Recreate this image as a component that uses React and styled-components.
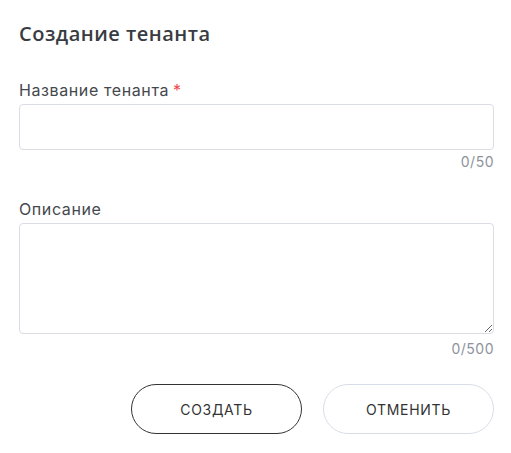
import React from 'react';
import styled, { createGlobalStyle } from 'styled-components';

const GlobalStyle = createGlobalStyle`
  body {
    margin: 0;
    background: #ffffff;
    font-family: Inter, "Noto Sans", sans-serif;
  }
`;

const Form = styled.form`
  display: flex;
  flex-direction: column;
  padding: 22px 17px 0 19px;
`;

const Title = styled.h2`
  margin: 0 0 34px;
  font-family: "Open Sans", sans-serif;
  font-size: 20px;
  font-weight: 600;
  letter-spacing: 0.5px;
  color: #383c42;
  line-height: 24px;
`;

const Field = styled.div`
  display: flex;
  flex-direction: column;
  margin-bottom: ${p => p.$gap || 0}px;
`;

const Label = styled.label`
  font-size: 16px;
  letter-spacing: 0.6px;
  color: #45484d;
  line-height: 20px;
  margin-bottom: 4px;
`;

const Star = styled.span`
  color: #f0494c;
  margin-left: 4px;
`;

const Input = styled.input`
  box-sizing: border-box;
  height: 46px;
  border: 1px solid #dadce6;
  border-radius: 4px;
  outline: none;
  padding: 0 12px;
  font: inherit;
`;

const TextArea = styled.textarea`
  box-sizing: border-box;
  height: 111px;
  border: 1px solid #dadce6;
  border-radius: 4px;
  outline: none;
  padding: 10px 12px;
  font: inherit;
  resize: vertical;
`;

const Counter = styled.div`
  align-self: flex-end;
  font-size: 14px;
  letter-spacing: 0.5px;
  color: #8d929c;
  line-height: 18px;
  margin-top: ${p => p.$top || 3}px;
`;

const Actions = styled.div`
  display: flex;
  justify-content: flex-end;
  gap: 21px;
  margin-top: 26px;
`;

const Button = styled.button`
  width: 171px;
  height: 50px;
  border-radius: 25px;
  background: #fff;
  border: 1px solid ${p => (p.$primary ? '#333' : '#d8dee8')};
  font-family: Inter, "Noto Sans", sans-serif;
  font-size: 14px;
  letter-spacing: 0.7px;
  color: #333;
  cursor: pointer;
`;

const App = () => (
  <>
    <GlobalStyle />
    <Form onSubmit={e => e.preventDefault()}>
      <Title>Создание тенанта</Title>
      <Field $gap={28}>
        <Label>
          Название тенанта<Star>*</Star>
        </Label>
        <Input />
        <Counter>0/50</Counter>
      </Field>
      <Field>
        <Label>Описание</Label>
        <TextArea />
        <Counter $top={6}>0/500</Counter>
      </Field>
      <Actions>
        <Button $primary type="submit">СОЗДАТЬ</Button>
        <Button type="button">ОТМЕНИТЬ</Button>
      </Actions>
    </Form>
  </>
);

export default App;
